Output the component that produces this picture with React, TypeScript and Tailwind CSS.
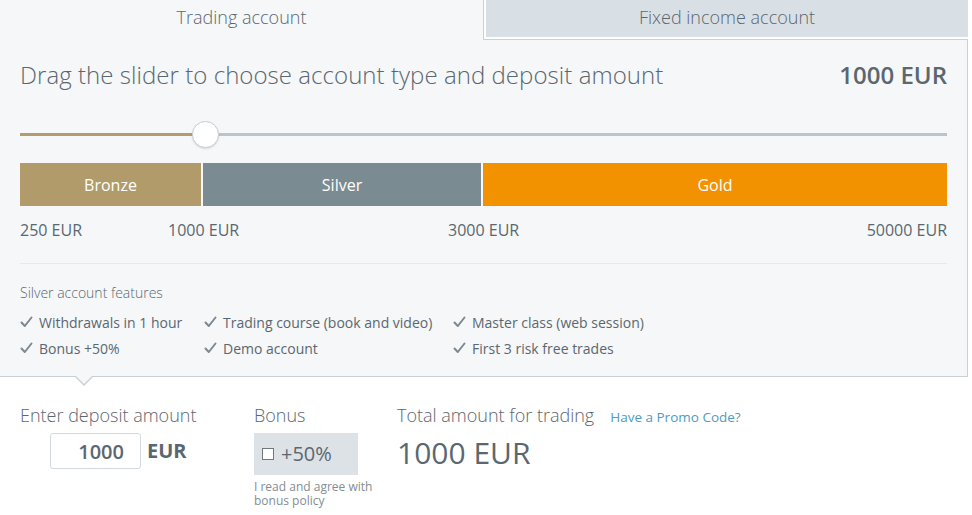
import { useState } from 'react';

const features = [
  ['Withdrawals in 1 hour', 'Trading course (book and video)', 'Master class (web session)'],
  ['Bonus +50%', 'Demo account', 'First 3 risk free trades'],
];

function Check() {
  return (
    <svg width="13" height="12" viewBox="0 0 13 12" className="mr-[6px] shrink-0">
      <path d="M1.5 6.5 L4.8 10 L11.5 1.5" fill="none" stroke="#7d8890" strokeWidth="2" strokeLinecap="round" strokeLinejoin="round" />
    </svg>
  );
}

export default function App() {
  const [deposit, setDeposit] = useState('1000');
  const [agree, setAgree] = useState(false);

  return (
    <div className="w-[972px] h-[515px] bg-white overflow-hidden text-[#5b6770]" style={{ fontFamily: '"Open Sans", "Liberation Sans", sans-serif' }}>
      <div className="w-[968px]">
        {/* Tabs */}
        <div className="flex h-[40px]">
          <div className="w-[483px] bg-[#f5f7f9] flex items-center justify-center pb-[5px]">
            <span className="text-[18px] font-light">Trading account</span>
          </div>
          <div className="w-[485px] border-l border-b border-[#c9d1d7] bg-white pl-[2px] pb-[2px]">
            <div className="h-full bg-[#d9e0e5] flex items-center justify-center pb-[3px]">
              <span className="text-[18px] font-light">Fixed income account</span>
            </div>
          </div>
        </div>

        {/* Panel */}
        <div className="relative bg-[#f5f7f9] border-r border-b border-[#c9d1d7] h-[337px] px-5">
          <div className="flex items-center justify-between pt-[20px] h-[50px]">
            <span className="text-[24px] font-light tracking-[0.05px]">Drag the slider to choose account type and deposit amount</span>
            <span className="text-[24px] font-semibold">1000 EUR</span>
          </div>

          {/* Slider */}
          <div className="relative h-[27px] mt-[31px] flex items-center">
            <div className="h-[3px] w-[185px] bg-[#b39d6e]" />
            <div className="h-[3px] flex-1 bg-[#b8c5ce]" />
            <div className="absolute left-[172px] top-0 w-[27px] h-[27px] rounded-full bg-white border border-[#c4ced5] shadow-[0_1px_2px_rgba(0,0,0,0.12)]" />
          </div>

          {/* Account bars */}
          <div className="flex gap-[2px] h-[43px] mt-[15px] text-white text-[16px]">
            <div className="w-[181px] bg-[#b19b6b] flex items-center justify-center">Bronze</div>
            <div className="w-[278px] bg-[#7a8b91] flex items-center justify-center">Silver</div>
            <div className="flex-1 bg-[#f39200] flex items-center justify-center">Gold</div>
          </div>

          {/* Ticks */}
          <div className="flex h-[57px] items-start pt-[13px] text-[16px] leading-[22px]">
            <span className="w-[148px]">250 EUR</span>
            <span className="w-[280px]">1000 EUR</span>
            <span className="flex-1">3000 EUR</span>
            <span>50000 EUR</span>
          </div>

          <div className="h-px bg-[#e4e9ec]" />

          {/* Features */}
          <div className="pt-[18px] text-[14px] font-light">Silver account features</div>
          <div className="mt-[6px] text-[14px]">
            {features.map((row, i) => (
              <div key={i} className="flex h-[26px] items-center">
                {row.map((f, j) => (
                  <div key={j} className={`flex items-center ${j === 0 ? 'w-[184px]' : j === 1 ? 'w-[249px]' : ''}`}>
                    <Check />
                    <span>{f}</span>
                  </div>
                ))}
              </div>
            ))}
          </div>

          {/* Caret */}
          <div className="absolute left-[75px] bottom-[-10px] w-0 h-0 border-l-[9px] border-r-[9px] border-t-[9px] border-l-transparent border-r-transparent border-t-[#c9d1d7]" />
          <div className="absolute left-[76px] bottom-[-8px] w-0 h-0 border-l-[8px] border-r-[8px] border-t-[8px] border-l-transparent border-r-transparent border-t-[#f5f7f9]" />
        </div>

        {/* Bottom form */}
        <div className="flex pt-[25px] px-5">
          <div className="w-[234px]">
            <div className="text-[18px] font-light leading-[26px]">Enter deposit amount</div>
            <div className="flex items-center mt-[5px] ml-[30px]">
              <input
                value={deposit}
                onChange={(e) => setDeposit(e.target.value)}
                className="w-[91px] h-[36px] bg-white border border-[#d3d9dd] rounded-[3px] text-right pr-[16px] text-[20px] font-semibold text-[#5b6770] outline-none"
              />
              <span className="ml-[6px] text-[20px] font-bold">EUR</span>
            </div>
          </div>

          <div className="w-[143px]">
            <div className="text-[18px] font-light leading-[26px]">Bonus</div>
            <label className="mt-[5px] w-[104px] h-[42px] bg-[#dde2e6] flex items-center pl-[8px] cursor-pointer">
              <span
                onClick={() => setAgree(!agree)}
                className="w-[12px] h-[12px] border border-[#6f7a82] bg-white mr-[7px] flex items-center justify-center text-[10px] leading-none"
              >
                {agree ? '✓' : ''}
              </span>
              <span className="text-[20px]">+50%</span>
            </label>
            <div className="mt-[5px] text-[12px] leading-[14px] text-[#838d94]">
              <div className="h-[14px]">I read and agree with</div>
              <div className="h-[14px]">bonus policy</div>
            </div>
          </div>

          <div>
            <div className="flex items-baseline">
              <span className="text-[18px] font-light leading-[26px]">Total amount for trading</span>
              <a href="#" className="ml-[16px] text-[13.5px] text-[#4d9cbf]">Have a Promo Code?</a>
            </div>
            <div className="mt-[5px] text-[30px] leading-[40px]">{deposit} EUR</div>
          </div>
        </div>
      </div>
    </div>
  );
}
